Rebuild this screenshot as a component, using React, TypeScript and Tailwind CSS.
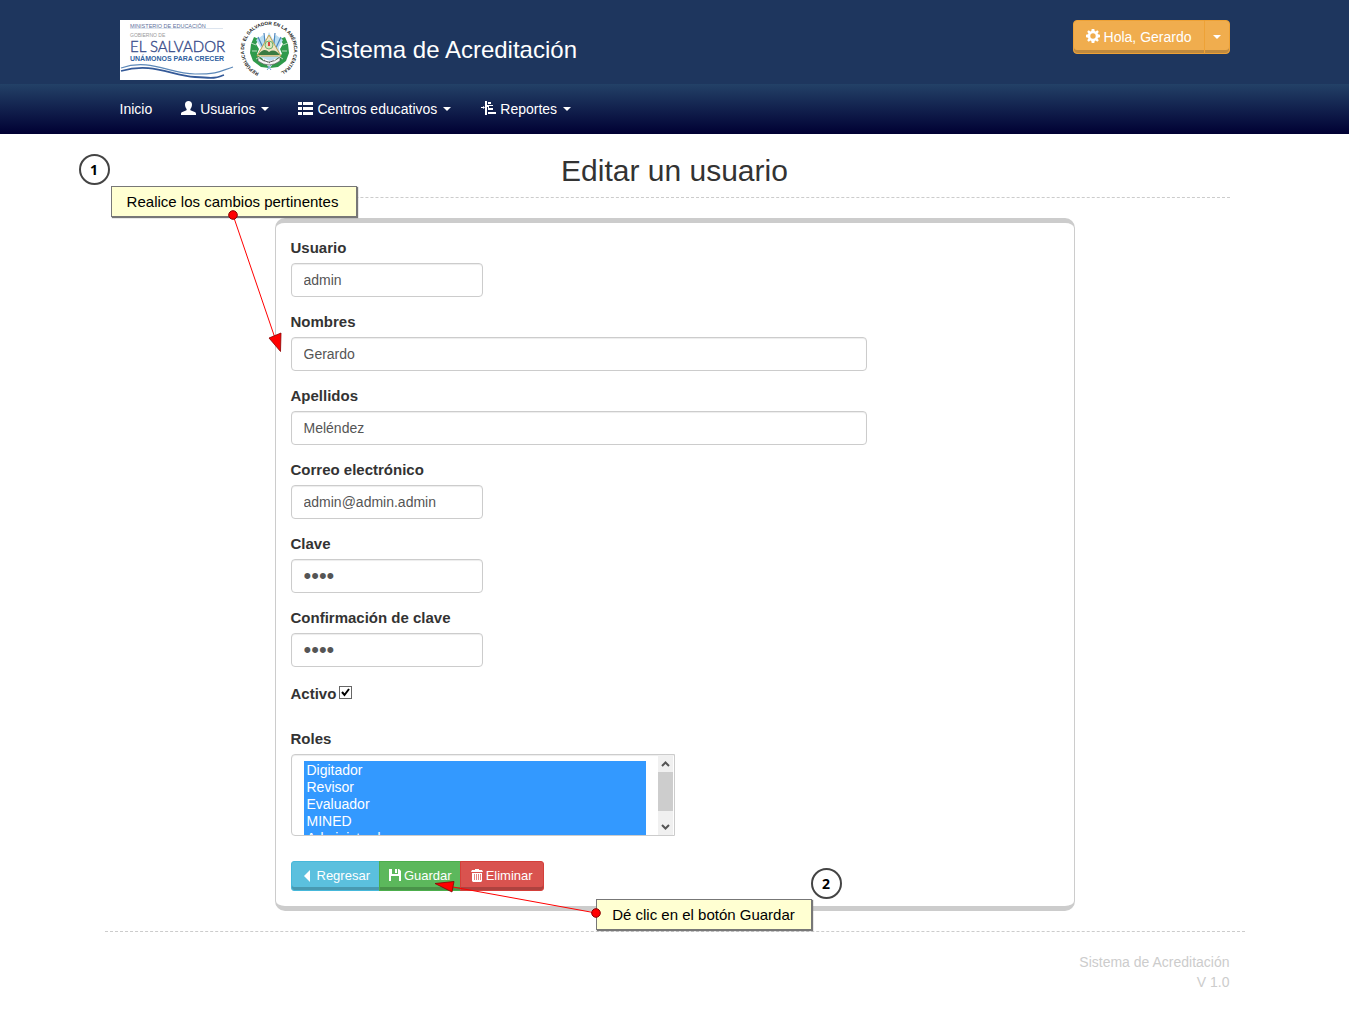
import { useState, type ReactNode } from "react";

function Caret() {
  return <span aria-hidden="true" className="inline-block border-x-4 border-t-4 border-x-transparent border-t-current" />;
}

function UserIcon() {
  return (
    <svg aria-hidden="true" className="mb-0.5" width="15" height="14" viewBox="0 0 15 14" fill="currentColor">
      <path d="M7.500 0C9.600 0 11 1.300 11 3.600C11 5 10.500 6.700 9.600 7.700C9.100 8.400 9.200 9.200 10 9.600L13.700 11C14.600 11.400 15 12 15 13V14H0V13C0 12 .4 11.400 1.300 11L5 9.600C5.800 9.200 5.900 8.400 5.400 7.700C4.500 6.700 4 5 4 3.600C4 1.300 5.400 0 7.500 0Z" />
    </svg>
  );
}

function ListIcon() {
  return (
    <svg aria-hidden="true" className="mb-0.5" width="15" height="13" viewBox="0 0 15 13" fill="currentColor">
      <path d="M0 0h4v3H0zM5 0h10v3H5zM0 5h4v3H0zM5 5h10v3H5zM0 10h4v3H0zM5 10h10v3H5z" />
    </svg>
  );
}

function AlignIcon() {
  return (
    <svg aria-hidden="true" className="mb-0.5" width="16" height="14" viewBox="0 0 16 14" fill="currentColor">
      <path d="M5 0h2v14H5zM1 6h2V5L5 6.500L3 8V7H1zM8 1h3v2H8zM7 4h6v1H9v2h4v2H8V6H7zM8 11h8v2H8z" />
    </svg>
  );
}

function GearIcon() {
  return (
    <svg aria-hidden="true" className="mb-0.5" width="14" height="14" viewBox="0 0 14 14" fill="currentColor" fillRule="evenodd">
      <path d="M5.700 0h2.600l.4 2 .9.400L11.300 1.200 12.800 2.700 11.600 4.400 12 5.300 14 5.700v2.600l-2 .4-.4.900 1.200 1.700-1.500 1.500-1.700-1.200-.9.400-.4 2H5.700l-.4-2-.9-.4-1.700 1.200-1.500-1.500 1.200-1.700-.4-.9L0 8.300V5.700l2-.4.400-.9L1.200 2.700 2.700 1.200 4.400 2.400 5.300 2zM7 4.300A2.700 2.700 0 1 0 7 9.700A2.700 2.700 0 1 0 7 4.300Z" />
    </svg>
  );
}

function BackIcon() {
  return (
    <svg aria-hidden="true" width="12" height="12" viewBox="0 0 12 12" fill="currentColor">
      <path d="M8 0v12L2 6z" />
    </svg>
  );
}

function SaveIcon() {
  return (
    <svg aria-hidden="true" className="mb-0.5" width="12" height="12" viewBox="0 0 12 12" fill="currentColor">
      <path d="M0 0h3v5h6V0h1l2 2v10h-2V7H2v5H0zM6 0h2v4H6z" />
    </svg>
  );
}

function TrashIcon() {
  return (
    <svg aria-hidden="true" className="mb-0.5" width="12" height="13" viewBox="0 0 12 13" fill="currentColor" fillRule="evenodd">
      <path d="M4 0h4v1h3l1 2H0L1 1h3zM1 4h10v8l-1 1H2l-1-1zM3 5v6h.7V5zM5.200 5v6h.7V5zM7.300 5v6H8V5zM9.300 5v6h.7V5z" />
    </svg>
  );
}

function Logo() {
  return (
    <svg role="img" aria-label="Gobierno de El Salvador" width="180" height="60" viewBox="0 0 180 60" className="bg-white">
      <g fontFamily="'Liberation Sans', sans-serif">
        <text x="10" y="8" fontSize="5.500" fill="#5e6f9b">MINISTERIO DE EDUCACIÓN</text>
        <text x="10" y="17" fontSize="5" fill="#999">GOBIERNO DE</text>
        <text x="10" y="32" fontSize="15" fontFamily="Lato, sans-serif" fontWeight="300" fill="#3c4f8c" stroke="#3c4f8c" strokeWidth=".4">EL SALVADOR</text>
        <text x="10" y="41" fontSize="7" fontWeight="bold" fill="#2f5fa0">UNÁMONOS PARA CRECER</text>
      </g>
      <path d="M10 8.500H103" stroke="#b9c8dc" strokeWidth=".5" />
      <path d="M1 48C30 38 50 54 75 54S100 51 113 47" fill="none" stroke="#5c88b8" strokeWidth="1.200" />
      <path d="M1 51C32 42 50 55 75 57S97 57 104 55" fill="none" stroke="#355a98" strokeWidth="1.800" />
      <path id="seal-ring" d="M139 52.900A25 25 0 1 1 159 52.900" fill="none" />
      <text fontFamily="'Liberation Sans', sans-serif" fontSize="4.800" fontWeight="bold" fill="#222">
        <textPath href="#seal-ring">REPÚBLICA DE EL SALVADOR EN LA AMÉRICA CENTRAL</textPath>
      </text>
      <g fill="#2f9a4b">
        <path d="M134 17l5 2-3 5 3 5-2 5 5 4 5 7 2 3-8-1-8-6-3-8 1-9z" />
        <path d="M165 17l-5 2 3 5-3 5 2 5-5 4-5 7-2 3 8-1 8-6 3-8-1-9z" />
      </g>
      <path d="M136 20l7-5 3 5 3-8 4 8 3-5 7 5-4 7 1 10-10 4-10-4 1-9z" fill="#b9ddf2" />
      <path d="M138 17l7 15M161 17l-7 15M144 13l2 20M155 13l-2 20" stroke="#4b86bd" strokeWidth="1.200" />
      <path d="M149 15l12 21h-24z" fill="#f1e4c5" stroke="#c0a450" strokeWidth="1" />
      <circle cx="149" cy="25" r="4" fill="#dce5bd" stroke="#4ca75b" strokeWidth=".8" />
      <path d="M149 22v4" stroke="#d33" strokeWidth="1.800" />
      <path d="M138 35c4-6 8-6 11-3 4-3 8-1 11 3z" fill="#397b43" />
      <path d="M138 37q11 10 22 0v4q-11 8-22 0z" fill="#f6f6f6" stroke="#555" strokeWidth=".7" />
      <path d="M144 40l5 3 5-3" stroke="#444" fill="none" strokeDasharray="1 1" />
      <path d="M148 46l3 4M151 45l-4 5" stroke="#6ba6d2" strokeWidth="1" />
      <path d="M131 23l5 2M132 31l5 0M136 39l5-3M168 23l-5 2M167 31l-5 0M163 39l-5-3" stroke="#d9eadb" strokeWidth=".8" />
    </svg>
  );
}

function NavItem({ icon, children }: { icon: ReactNode; children: ReactNode }) {
  return (
    <button type="button" className="flex h-full items-center gap-1 text-white">
      {icon}
      <span>{children}</span>
      <span className="ml-0.5 flex"><Caret /></span>
    </button>
  );
}

function Field({ id, label, value, type = "text", wide = false }: { id: string; label: string; value: string; type?: string; wide?: boolean }) {
  return (
    <div className="mb-[15px]">
      <label htmlFor={id} className="mb-[5px] block text-[15px] leading-5 font-bold">{label}</label>
      <input
        id={id}
        type={type}
        defaultValue={value}
        className={`block h-[34px] rounded border border-[#ccc] bg-white px-3 text-[#555] shadow-[inset_0_1px_1px_rgba(0,0,0,0.075)] ${wide ? "w-3/4" : "w-1/4"} ${type === "password" ? "text-[22px]" : "text-sm"}`}
      />
    </div>
  );
}

function Callout({ className, children }: { className: string; children: ReactNode }) {
  return (
    <div className={`absolute flex h-[31px] items-center justify-center border border-[#777] bg-[#ffffd2] text-[15px] whitespace-nowrap text-black shadow-[1px_1px_1px_#777] ${className}`}>
      {children}
    </div>
  );
}

function Step({ className, children }: { className: string; children: ReactNode }) {
  return (
    <div className={`absolute flex size-[31px] items-center justify-center rounded-full border-2 border-[#444] bg-white font-['Open_Sans',sans-serif] text-sm font-bold text-black ${className}`}>
      {children}
    </div>
  );
}

const roles = ["Digitador", "Revisor", "Evaluador", "MINED", "Administrador"];

export default function App() {
  const [selected, setSelected] = useState(roles);
  return (
    <div className="bg-white font-['Liberation_Sans',Arial,sans-serif] text-sm leading-5 text-[#333]">
      <header className="bg-[#1e365e] text-white">
        <div className="mx-auto flex h-[84px] max-w-[1140px] items-start justify-between px-[15px] pt-5">
          <div className="flex items-center gap-5">
            <Logo />
            <span className="text-2xl">Sistema de Acreditación</span>
          </div>
          <div className="flex h-[34px]">
            <button type="button" className="flex items-center gap-1 rounded-l border border-[#eea236] bg-[#f0ad4e] px-3 shadow-[inset_0_-3px_0_rgba(0,0,0,0.2)]">
              <GearIcon />
              Hola, Gerardo
            </button>
            <button type="button" aria-label="Abrir menú" className="-ml-px flex w-[26px] items-center justify-center rounded-r border border-[#eea236] bg-[#f0ad4e] shadow-[inset_0_-3px_0_rgba(0,0,0,0.2)]">
              <Caret />
            </button>
          </div>
        </div>
      </header>
      <nav className="bg-[linear-gradient(#234167,#000033)] text-white">
        <div className="mx-auto flex h-[50px] max-w-[1140px] items-center gap-[29px] px-[15px]">
          <a href="#inicio">Inicio</a>
          <NavItem icon={<UserIcon />}>Usuarios</NavItem>
          <NavItem icon={<ListIcon />}>Centros educativos</NavItem>
          <NavItem icon={<AlignIcon />}>Reportes</NavItem>
        </div>
      </nav>

      <div className="relative mx-auto max-w-[1140px]">
        <main className="px-[15px] pt-5 pb-5">
          <h1 className="mb-5 border-b border-dashed border-[#ccc] pb-2.5 text-center text-[30px] leading-[33px]">Editar un usuario</h1>
          <form onSubmit={(e) => e.preventDefault()} className="mx-auto max-w-[800px] rounded-[10px] border border-y-[5px] border-[#ccc] p-[15px]">
            <Field id="usuario" label="Usuario" value="admin" />
            <Field id="nombres" label="Nombres" value="Gerardo" wide />
            <Field id="apellidos" label="Apellidos" value="Meléndez" wide />
            <Field id="correo" label="Correo electrónico" value="admin@admin.admin" />
            <Field id="clave" label="Clave" value="1234" type="password" />
            <Field id="confirmacion" label="Confirmación de clave" value="1234" type="password" />
            <div className="mb-[25px] flex items-start gap-[3px] pt-0.5">
              <label htmlFor="activo" className="text-[15px] leading-5 font-bold">Activo</label>
              <span className="relative mt-0.5 flex">
                <input id="activo" type="checkbox" defaultChecked className="peer size-[13px] appearance-none border border-[#666] bg-white" />
                <svg aria-hidden="true" viewBox="0 0 13 13" className="pointer-events-none absolute inset-0 hidden size-[13px] peer-checked:block">
                  <path d="M3 6l2.500 3L10 3" fill="none" stroke="#000" strokeWidth="2" />
                </svg>
              </span>
            </div>
            <label htmlFor="roles" className="mb-[5px] block text-[15px] leading-5 font-bold">Roles</label>
            <div className="mb-[25px] flex h-[82px] w-1/2 overflow-hidden rounded-l border border-[#ccc] shadow-[inset_0_1px_1px_rgba(0,0,0,0.075)]">
              <select
                id="roles"
                multiple
                value={selected}
                onChange={(e) => setSelected(Array.from(e.target.selectedOptions, (o) => o.value))}
                className="mr-3 ml-3 h-full min-w-0 flex-1 appearance-none overflow-y-auto bg-none pt-1.5 [scrollbar-width:none]"
              >
                {roles.map((role) => (
                  <option key={role} value={role} className="h-[17px] min-h-0 p-0 px-[3px] pt-px leading-4 text-[#555] checked:bg-[linear-gradient(#3399ff,#3399ff)] checked:text-white">{role}</option>
                ))}
              </select>
              <div aria-hidden="true" className="mr-px flex w-[15px] flex-col items-center bg-[#f0f0f0] text-[#555]">
                <svg width="15" height="17" viewBox="0 0 15 17" fill="none" stroke="currentColor" strokeWidth="2"><path d="M4 11l3.500-3.500L11 11" /></svg>
                <div className="h-[39px] w-full bg-[#cdcdcd]" />
                <svg width="15" height="24" viewBox="0 0 15 24" fill="none" stroke="currentColor" strokeWidth="2"><path d="M4 14l3.500 3.500L11 14" /></svg>
              </div>
            </div>
            <div className="flex h-[30px] text-[13px] text-white">
              <button type="button" className="flex items-center gap-[3px] rounded-l-[3px] border border-[#46b8da] bg-[#5bc0de] pr-[9px] pl-2.5 shadow-[inset_0_-3px_0_rgba(0,0,0,0.2)]"><BackIcon />Regresar</button>
              <button type="submit" className="-ml-px flex items-center gap-[3px] border border-[#4cae4c] bg-[#5cb85c] pr-2 pl-[9px] shadow-[inset_0_-3px_0_rgba(0,0,0,0.2)]"><SaveIcon />Guardar</button>
              <button type="button" className="-ml-px flex items-center gap-[3px] rounded-r-[3px] border border-[#d43f3a] bg-[#d9534f] px-2.5 shadow-[inset_0_-3px_0_rgba(0,0,0,0.2)]"><TrashIcon />Eliminar</button>
            </div>
          </form>
        </main>
        <footer className="border-t border-dashed border-[#ccc] px-[15px] pt-5 pb-5 text-right text-[#ccc]">
          <p>Sistema de Acreditación</p>
          <p>V 1.0</p>
        </footer>

        <Step className="top-5 left-[-26px]">1</Step>
        <Callout className="top-[52px] left-[6px] w-[246px] pr-0.5">Realice los cambios pertinentes</Callout>
        <Callout className="top-[765px] left-[491px] w-[216px]">Dé clic en el botón Guardar</Callout>
        <Step className="top-[734px] left-[706px]">2</Step>
        <svg aria-hidden="true" width="60" height="150" viewBox="0 0 60 150" className="pointer-events-none absolute top-[74px] left-[120px]">
          <path d="M8 7L51 133" stroke="red" />
          <path d="M44 130L56 125L55.500 143.500Z" fill="red" stroke="#800" strokeWidth=".8" />
          <circle cx="8" cy="7" r="4.300" fill="red" stroke="#800" />
        </svg>
        <svg aria-hidden="true" width="180" height="50" viewBox="0 0 180 50" className="pointer-events-none absolute top-[740px] left-[320px]">
          <path d="M28 13L171 39" stroke="red" />
          <path d="M10 9.500L29 7.500L27 18Z" fill="red" stroke="#800" strokeWidth=".8" />
          <circle cx="171" cy="39" r="4.300" fill="red" stroke="#800" />
        </svg>
      </div>
    </div>
  );
}
